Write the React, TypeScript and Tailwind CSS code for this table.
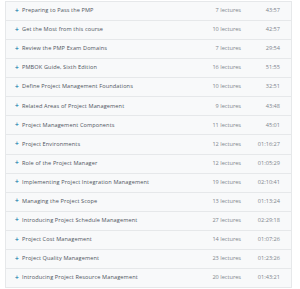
import React from 'react';

type Section = { title: string; lectures: number; time: string };

const sections: Section[] = [
  { title: 'Preparing to Pass the PMP', lectures: 7, time: '43:57' },
  { title: 'Get the Most from this course', lectures: 10, time: '42:57' },
  { title: 'Review the PMP Exam Domains', lectures: 7, time: '29:54' },
  { title: 'PMBOK Guide, Sixth Edition', lectures: 16, time: '51:55' },
  { title: 'Define Project Management Foundations', lectures: 10, time: '32:51' },
  { title: 'Related Areas of Project Management', lectures: 9, time: '43:48' },
  { title: 'Project Management Components', lectures: 11, time: '45:01' },
  { title: 'Project Environments', lectures: 12, time: '01:16:27' },
  { title: 'Role of the Project Manager', lectures: 12, time: '01:05:29' },
  { title: 'Implementing Project Integration Management', lectures: 19, time: '02:10:41' },
  { title: 'Managing the Project Scope', lectures: 13, time: '01:13:24' },
  { title: 'Introducing Project Schedule Management', lectures: 27, time: '02:29:18' },
  { title: 'Project Cost Management', lectures: 14, time: '01:07:26' },
  { title: 'Project Quality Management', lectures: 23, time: '01:23:26' },
  { title: 'Introducing Project Resource Management', lectures: 20, time: '01:43:21' },
];

export default function App() {
  return (
    <div className="w-[300px] h-[289px] bg-white overflow-hidden pl-[5px] pt-[1px] pr-[8px] font-['Open_Sans',sans-serif]">
      <div className="flex flex-col">
        {sections.map((s) => (
          <div
            key={s.title}
            className="h-[20.07px] -mb-px flex items-center bg-[#f8f9fa] border border-[#e6e8ea] text-[5.6px] leading-none"
          >
            <span className="w-[16px] pl-[9px] text-[#3a8fb7] font-bold text-[6.5px]">+</span>
            <span className="flex-1 text-[#4f555e] font-medium tracking-[0.02em]">{s.title}</span>
            <span className="w-[60px] text-right text-[#80858c]">{s.lectures} lectures</span>
            <span className="w-[50px] pr-[11px] text-right text-[#80858c]">{s.time}</span>
          </div>
        ))}
      </div>
    </div>
  );
}
